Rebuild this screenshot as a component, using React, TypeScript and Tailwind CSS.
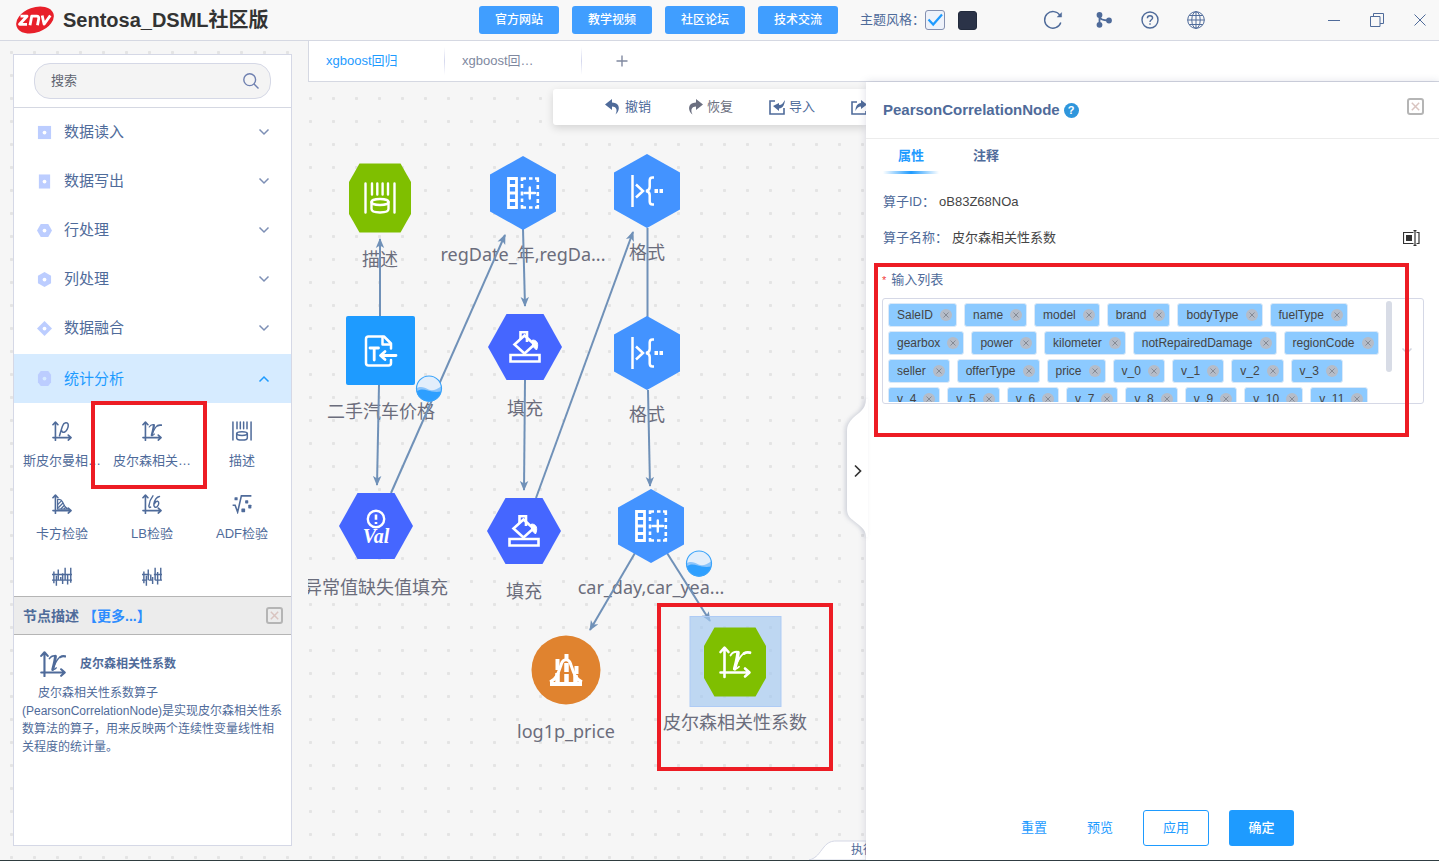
import React, { useState } from "react";

/* ------------------------------------------------------------------ */
/* Operator glyphs, all drawn in a 32 x 32 box with the current colour */
/* ------------------------------------------------------------------ */

type GlyphName =
  | "describe" | "pearson" | "spearman" | "chi" | "lb" | "adf" | "signalA" | "signalB"
  | "columns" | "format" | "fill" | "importText" | "value" | "normal";

const axes = (
  <g fill="none" stroke="currentColor" strokeWidth="2.6" strokeLinecap="round" strokeLinejoin="round">
    <path d="M5.500 31V2M1.500 6l4-4.400L9.500 6" />
    <path d="M1.500 26.500H30M26 22.500l4.500 4L26 30.500" />
  </g>
);

const glyphs: Record<GlyphName, React.ReactNode> = {
  describe: (
    <g fill="none" stroke="currentColor" strokeWidth="2.4" strokeLinecap="round">
      <path d="M1.500 1.500v29M30.500 1.500v29M8 1.500v11M13.300 1.500v11M18.600 1.500v11M24 1.500v11" />
      <ellipse cx="16" cy="20" rx="8.500" ry="3" />
      <path d="M7.500 20v7c0 4.600 17 4.600 17 0v-7" />
    </g>
  ),
  pearson: (
    <g fill="none" stroke="currentColor" strokeLinecap="round">
      {axes}
      <path d="M11.500 9.500c1.500-2.500 4-4 7-3.700" strokeWidth="1.800" />
      <path d="M19 6.500c-.3 5-2 11-3.300 16.300" strokeWidth="3.600" />
      <path d="M15.500 22.800c1.800.3 3.300-.5 4.500-2" strokeWidth="1.800" />
      <path d="M18 17c2-4.500 4.500-8.500 7.500-10" strokeWidth="1.800" />
      <path d="M25 7.500c2-1.300 4-1.300 6-.8" strokeWidth="2.800" />
    </g>
  ),
  spearman: (
    <g>
      {axes}
      <g fill="none" stroke="currentColor" strokeWidth="2.400" strokeLinecap="round">
        <path d="M12 23.500c2-6 3-11 5-16 2-5.500 8.500-6.500 9-1.500 .5 5-3 10.500-6.500 12-2 .6-3.500-.5-3.800-2.200" />
      </g>
    </g>
  ),
  chi: (
    <g>
      {axes}
      <path d="M9 24V9c3-1 6 0 8 4 2 5 5 9 8 11z" fill="none" stroke="currentColor" strokeWidth="2" />
      <path d="M9 17l6-6M10 22l8-8M14 24l6-6M19 24l3-3" fill="none" stroke="currentColor" strokeWidth="2" />
    </g>
  ),
  lb: (
    <g>
      {axes}
      <g fill="none" stroke="currentColor" strokeWidth="2.300" strokeLinecap="round">
        <path d="M17.500 3c-4 5-6 11-6.500 16-.1 2.500 1.500 3 2.800 2" />
        <path d="M28 4c-5 1-8 7-9 12-.8 5 3 6.500 5.500 4 3-3 3-8 .5-8.500-2-.3-4 1.500-5 4" />
      </g>
    </g>
  ),
  adf: (
    <g>
      <path d="M1 18h4l4 11L15 3h16" fill="none" stroke="currentColor" strokeWidth="2.500" />
      <g fill="currentColor">
        <rect x="4" y="5" width="5" height="5" rx="1" />
        <rect x="21" y="10" width="5" height="5" rx="1" />
        <rect x="15" y="23" width="6" height="6" rx="1" />
        <rect x="26" y="17" width="5" height="6" rx="1" />
      </g>
    </g>
  ),
  signalA: (
    <g fill="none" stroke="currentColor" strokeWidth="2.300">
      <path d="M0 12h32M0 21h32M3 7v19M7 14v16M10 4v17M14 16v6M17 10v17M21 1v20M25 12v16M30 1v24" />
    </g>
  ),
  signalB: (
    <g fill="none" stroke="currentColor" strokeWidth="2.300">
      <path d="M0 12h12M19 12h13M0 21h7M11 21h6M21 21h11M3 7v19M7 14v16M10 4v17M14 12v8M17 16v11M21 1v20M25 8v20M30 1v20" />
    </g>
  ),
  columns: (
    <g fill="none" stroke="currentColor">
      <path d="M1.500 1.500h8v29h-8zM1.500 8.500h8M1.500 16h8M1.500 23.500h8" strokeWidth="2.800" />
      <path d="M15 4V1.500h4M22 1.500h3.500M28 1.500h2.800V5M30.800 8v4M30.800 15v4M30.800 22v4M30.800 28v2.500H28M25.500 30.500H22M19 30.500h-4V28M15 25v-3.500M15 18.500v-4M15 11V7" strokeWidth="2.600" />
      <path d="M22.800 10.500v11M17.500 16h10.500" strokeWidth="2.400" strokeLinecap="round" />
    </g>
  ),
  format: (
    <g fill="none" stroke="currentColor" strokeWidth="2.500">
      <path d="M1.500 0v32M5 9.500l7 6.500-7 6.500" />
      <path d="M23 2.500h-1.500c-2 0-2.800 1-2.800 3v6.500c0 2.500-1 3.500-3.700 4 2.700.500 3.700 1.500 3.700 4v6.500c0 2 .8 3 2.800 3H23" />
      <path d="M23.500 16h3.500M28.500 16H32" strokeWidth="3.800" />
    </g>
  ),
  fill: (
    <g fill="none" stroke="currentColor" strokeWidth="2.600">
      <path d="M1.500 24h29v6.500h-29z" />
      <path d="M15.500 4.500L5.500 13.500l10 9 10-9z" />
      <path d="M11.500 8V1.300H18V11" />
      <path d="M23.500 9c5 0 6.500 4.500 4 10L23.500 15z" fill="currentColor" strokeWidth="1" />
    </g>
  ),
  importText: (
    <g fill="none" stroke="currentColor" strokeWidth="2.500" strokeLinecap="round" strokeLinejoin="round">
      <path d="M26 13.500V8.500l-7-7H3.500C2 1.500 1 2.500 1 4v24c0 1.500 1 2.500 2.500 2.500h20c1.500 0 2.500-1 2.500-2.500v-3" />
      <path d="M17.500 2v7.500H25" />
      <path d="M5 13h8.500M9.200 13v12" strokeWidth="2.800" />
      <path d="M31 20.500H16M20 16.500l-4.500 4 4.500 4" strokeWidth="2.800" />
    </g>
  ),
  value: (
    <g>
      <circle cx="16" cy="9" r="8.200" fill="none" stroke="currentColor" strokeWidth="2.400" />
      <path d="M16 4.500v5.200M16 12v2" fill="none" stroke="currentColor" strokeWidth="2.600" />
      <text x="16" y="33" textAnchor="middle" fill="currentColor" fontSize="20" fontStyle="italic" fontWeight="700" fontFamily="'Liberation Serif', serif">
        Val
      </text>
    </g>
  ),
  normal: (
    <g fill="none" stroke="currentColor">
      <path d="M0 30h32" strokeWidth="4" />
      <path d="M0 28C7 25 9 17 11 11c2-7 8-7 10 0 2 6 4 14 11 17" strokeWidth="3" />
      <path d="M7.500 5v11M16.500 0v6M26.500 12v8" strokeWidth="4" />
      <path d="M7.500 19v10M16.500 9v9M16.500 20v10M25.500 21v9" strokeWidth="4.500" />
    </g>
  ),
};

function Glyph({ name, className }: { name: GlyphName; className?: string }) {
  return (
    <svg viewBox="0 0 32 32" className={className} aria-hidden="true">
      {glyphs[name]}
    </svg>
  );
}

function Chevron({ up, className }: { up?: boolean; className?: string }) {
  return (
    <svg viewBox="0 0 12 8" className={className} fill="none" stroke="currentColor" strokeWidth="1.500" aria-hidden="true">
      <path d={up ? "M1.500 6.500L6 2l4.500 4.500" : "M1.500 1.500L6 6l4.500-4.500"} />
    </svg>
  );
}

function BoxedClose({ label }: { label: string }) {
  return (
    <button type="button" aria-label={label} className="flex size-[17px] items-center justify-center rounded-[3px] border-2 border-[#b5b5b5]">
      <svg viewBox="0 0 9 9" className="size-[9px] text-[#d9c4c0]" stroke="currentColor" strokeWidth="1.500" aria-hidden="true">
        <path d="M.8.8l7.400 7.400M8.200.8L.8 8.200" />
      </svg>
    </button>
  );
}

/* ------------------------------------------------------------------ */
/* Header                                                               */
/* ------------------------------------------------------------------ */

const links = ["官方网站", "教学视频", "社区论坛", "技术交流"];

function Header() {
  const [light, setLight] = useState(true);
  return (
    <header className="flex h-[41px] shrink-0 items-center border-b border-[#d5d8e2] bg-[#f8f8f8] pr-3 text-[#4f6b9a]">
      <div className="flex w-[479px] shrink-0 items-center pl-[15px]">
        <svg viewBox="0 0 40 30" className="h-[30px] w-10" role="img" aria-label="znv">
          <ellipse cx="20" cy="15" rx="19.500" ry="12.500" fill="#e8202a" transform="rotate(-20 20 15)" />
          <g fill="none" stroke="#fff" strokeWidth="2.800" strokeLinejoin="round">
            <path d="M5.500 11.200h6.500L4.500 19.300h7.500" />
            <path d="M15 20.200l1.700-9h5c1.600 0 2.300 1 2 2.600l-1.200 6.400" />
            <path d="M27.200 10.500l1.900 8.700 6.200-8.700" />
          </g>
        </svg>
        <h1 className="ml-2 text-xl leading-7 font-bold text-[#333]">Sentosa_DSML社区版</h1>
      </div>
      <nav className="flex gap-[13px]">
        {links.map((t) => (
          <a key={t} href="#" className="flex h-7 w-20 items-center justify-center rounded-[3px] bg-[#409eff] text-xs font-medium text-white">
            {t}
          </a>
        ))}
      </nav>
      <label htmlFor="theme" className="ml-[22px] text-[13px]">主题风格：</label>
      <span className="relative size-5">
        <input
          id="theme"
          type="checkbox"
          checked={light}
          onChange={(e) => setLight(e.target.checked)}
          className="peer block size-5 appearance-none rounded-[3px] border border-[#8490b0] bg-[#eef2fa]"
        />
        <svg viewBox="0 0 20 20" className="pointer-events-none absolute inset-0 hidden size-5 peer-checked:block" fill="none" stroke="#1e9bff" strokeWidth="2.200" aria-hidden="true">
          <path d="M3.500 9.500l4.700 5L17 4.500" />
        </svg>
      </span>
      <button type="button" aria-label="深色主题" className="ml-[13px] size-[19px] rounded-[3px] border border-[#222a3c] bg-[#2b3348]" />
      <div className="ml-[66px] flex items-center gap-7">
        <button type="button" aria-label="刷新" className="mr-1 block">
          <svg viewBox="0 0 20 20" className="size-5" fill="none" stroke="currentColor" strokeWidth="1.400" aria-hidden="true">
            <path d="M17.800 12.500A8.300 8.300 0 1 1 17 5.500" />
            <path d="M18.600 2.600v4.500h-4.500z" fill="currentColor" strokeWidth=".4" />
          </svg>
        </button>
        <button type="button" aria-label="流程" className="block">
          <svg viewBox="0 0 18 18" className="size-[18px]" fill="currentColor" aria-hidden="true">
            <circle cx="4.500" cy="4" r="2.900" />
            <circle cx="4.500" cy="13.800" r="2.900" />
            <circle cx="14" cy="9.500" r="2.900" />
            <path d="M4.500 4v10M4.500 5c0 4 4 4.500 9 4.500" fill="none" stroke="currentColor" strokeWidth="1.800" />
          </svg>
        </button>
        <button type="button" aria-label="帮助" className="block">
          <svg viewBox="0 0 18 18" className="size-[18px]" fill="none" stroke="currentColor" strokeWidth="1.400" aria-hidden="true">
            <circle cx="9" cy="9" r="8" />
            <path d="M6.400 7.300C6.400 5.700 7.500 4.800 9 4.800s2.600.9 2.600 2.300c0 1.600-2.600 1.900-2.600 3.900M9 12.200v1.600" />
          </svg>
        </button>
        <button type="button" aria-label="语言" className="block">
          <svg viewBox="0 0 18 18" className="size-[18px]" fill="none" stroke="currentColor" strokeWidth="1" aria-hidden="true">
            <circle cx="9" cy="9" r="8.300" />
            <ellipse cx="9" cy="9" rx="4.200" ry="8.300" />
            <path d="M9 .7v16.600M.7 9h16.600M2.200 4.500h13.600M2.200 13.500h13.600" />
          </svg>
        </button>
      </div>
      <div className="ml-auto flex items-center gap-[29px]">
        <button type="button" aria-label="最小化" className="block">
          <svg viewBox="0 0 14 14" className="size-3.5" stroke="currentColor" aria-hidden="true"><path d="M1 7.500h12" /></svg>
        </button>
        <button type="button" aria-label="还原" className="block">
          <svg viewBox="0 0 14 14" className="size-3.5" fill="none" stroke="currentColor" aria-hidden="true">
            <path d="M.5 3.500h9.500v10H.5zM3.500 3.500v-3h10v10H10" />
          </svg>
        </button>
        <button type="button" aria-label="关闭" className="block">
          <svg viewBox="0 0 14 14" className="size-3.5" stroke="currentColor" aria-hidden="true"><path d="M1.500 1.500l11 11M12.500 1.500l-11 11" /></svg>
        </button>
      </div>
    </header>
  );
}

/* ------------------------------------------------------------------ */
/* Sidebar                                                              */
/* ------------------------------------------------------------------ */

const categories: { label: string; shape: string; active?: boolean }[] = [
  { label: "数据读入", shape: "M1 1h14v14H1z" },
  { label: "数据写出", shape: "M2 .5h12v15H2z" },
  { label: "行处理", shape: "M4 1h8l4 7-4 7H4L0 8z" },
  { label: "列处理", shape: "M8 0l7 4v8l-7 4-7-4V4z" },
  { label: "数据融合", shape: "M8 0l8 8-8 8-8-8z" },
  { label: "统计分析", shape: "M4 0h8l3 4v8l-3 4H4l-3-4V4z", active: true },
];

const operators: { label?: string; glyph: GlyphName }[] = [
  { label: "斯皮尔曼相…", glyph: "spearman" },
  { label: "皮尔森相关…", glyph: "pearson" },
  { label: "描述", glyph: "describe" },
  { label: "卡方检验", glyph: "chi" },
  { label: "LB检验", glyph: "lb" },
  { label: "ADF检验", glyph: "adf" },
  { glyph: "signalA" },
  { glyph: "signalB" },
];

function Sidebar() {
  return (
    <aside className="mt-[13px] mb-[14px] ml-[13px] flex w-[279px] shrink-0 flex-col border border-[#d5d8e6] bg-white text-[#4f6b9a]">
      <div className="shrink-0 border-b border-[#d5d8e2] px-5 py-2">
        <div className="flex h-9 items-center rounded-2xl border border-[#d5d8e6] bg-[#f4f4f4] pr-[11px] pl-4">
          <input
            type="text"
            aria-label="搜索"
            placeholder="搜索"
            className="min-w-0 flex-1 bg-transparent text-[13px] text-[#5a6072] outline-none placeholder:text-[#5f6470]"
          />
          <svg viewBox="0 0 16 16" className="size-4 text-[#6f80b0]" fill="none" stroke="currentColor" strokeWidth="1.400" aria-hidden="true">
            <circle cx="6.700" cy="6.700" r="5.900" />
            <path d="M11 11l4.500 4.500" />
          </svg>
        </div>
      </div>
      <ul className="shrink-0">
        {categories.map((c) => (
          <li key={c.label}>
            <button
              type="button"
              aria-expanded={!!c.active}
              className={
                c.active
                  ? "mt-px flex h-[49px] w-full items-center bg-[#d6ebff] pr-[21px] pl-[23px] text-[#1e9bff]"
                  : "flex h-[49px] w-full items-center pr-[21px] pb-px pl-[23px]"
              }
            >
              <svg viewBox="0 0 16 16" className="size-[15px]" aria-hidden="true">
                <path d={c.shape} fill="#bccdff" />
                <circle cx="8" cy="8" r="2" fill={c.active ? "#d6ebff" : "#fff"} />
              </svg>
              <span className="ml-3 flex-1 text-left text-[15px] leading-6">{c.label}</span>
              <Chevron up={c.active} className={c.active ? "h-2 w-3" : "h-2 w-3 text-[#7d8fb5]"} />
            </button>
          </li>
        ))}
      </ul>
      <div className="relative min-h-0 flex-1">
        <ul className="grid h-full grid-cols-[90px_90px_90px] content-start overflow-hidden pl-[3px]">
          {operators.map((o) => (
            <li key={o.glyph} className="h-[73px]">
              <button type="button" className="flex w-full flex-col items-center pt-[18px] whitespace-nowrap">
                <Glyph name={o.glyph} className="size-5" />
                {o.label && <span className="mt-[10px] text-[13px] leading-5">{o.label}</span>}
              </button>
            </li>
          ))}
        </ul>
        <div className="pointer-events-none absolute -top-0.5 left-[77px] h-[88px] w-[116px] border-4 border-[#ed1c24]" />
      </div>
      <section className="h-[249px] shrink-0">
        <div className="flex h-[39px] items-center border-y border-[#b5b5b5] bg-[#ececec] pr-2 pl-[9px] text-sm font-bold">
          <h2>节点描述</h2>
          <a href="#" className="mr-auto ml-1 text-[#2d8cff]">【更多...】</a>
          <BoxedClose label="关闭描述" />
        </div>
        <div className="pt-4 pr-2 pl-2 text-xs leading-[18px]">
          <div className="flex items-center gap-[14px] pl-[18px]">
            <Glyph name="pearson" className="size-[26px]" />
            <h3 className="font-bold">皮尔森相关性系数</h3>
          </div>
          <p className="mt-[7px] indent-4">
            皮尔森相关性系数算子 (PearsonCorrelationNode)是实现皮尔森相关性系数算法的算子，用来反映两个连续性变量线性相关程度的统计量。
          </p>
        </div>
      </section>
    </aside>
  );
}

/* ------------------------------------------------------------------ */
/* Flow canvas                                                          */
/* ------------------------------------------------------------------ */

const ORIGIN = { x: 308, y: 82 };

type Shape = "octagon" | "pointy" | "flat" | "square" | "circle";
type FlowNode = { id: string; label: string; shape: Shape; glyph: GlyphName; x: number; y: number; labelY: number; badge?: boolean; selected?: boolean };

const nodes: FlowNode[] = [
  { id: "n1", label: "描述", shape: "octagon", glyph: "describe", x: 380, y: 198, labelY: 259 },
  { id: "n2", label: "regDate_年,regDa...", shape: "pointy", glyph: "columns", x: 523, y: 193, labelY: 254 },
  { id: "n3", label: "格式", shape: "pointy", glyph: "format", x: 647, y: 191, labelY: 252 },
  { id: "n4", label: "二手汽车价格", shape: "square", glyph: "importText", x: 381, y: 351, labelY: 411, badge: true },
  { id: "n5", label: "填充", shape: "flat", glyph: "fill", x: 525, y: 347, labelY: 408 },
  { id: "n6", label: "格式", shape: "pointy", glyph: "format", x: 647, y: 353, labelY: 414 },
  { id: "n7", label: "异常值缺失值填充", shape: "flat", glyph: "value", x: 376, y: 526, labelY: 587 },
  { id: "n8", label: "填充", shape: "flat", glyph: "fill", x: 524, y: 531, labelY: 591 },
  { id: "n9", label: "car_day,car_yea...", shape: "pointy", glyph: "columns", x: 651, y: 526, labelY: 587, badge: true },
  { id: "n10", label: "log1p_price", shape: "circle", glyph: "normal", x: 566, y: 670, labelY: 731 },
  { id: "n11", label: "皮尔森相关性系数", shape: "octagon", glyph: "pearson", x: 735, y: 662, labelY: 722, selected: true },
];

const edges: [number, number, number, number][] = [
  [380, 318, 380, 239],
  [379, 385, 377, 485],
  [391, 493, 505, 235],
  [523, 229, 525, 306],
  [525, 380, 524, 490],
  [536, 498, 633, 232],
  [648, 390, 650, 486],
  [635, 553, 590, 630],
  [667, 553, 710, 621],
];

const shapes: Record<Shape, React.ReactNode> = {
  octagon: <path d="M-20.500-34.500h41L31-16v32L20.500 34.500h-41L-31 16v-32z" fill="#7fbf00" />,
  pointy: <path d="M0-37L33-18.500v37L0 37-33 18.500v-37z" fill="#4393ff" />,
  flat: <path d="M-18.500-33h37L37 0 18.500 33h-37L-37 0z" fill="#4566ff" />,
  square: <rect x="-35" y="-35" width="69" height="69" rx="2" fill="#1e9bff" />,
  circle: <circle r="34.500" fill="#e0832f" />,
};

function Canvas() {
  return (
    <div className="absolute inset-0 overflow-hidden">
      {nodes.map((n) => (
        <span
          key={n.id}
          className="absolute -translate-x-1/2 -translate-y-1/2 font-['Noto_Sans','Noto_Sans_CJK_SC',sans-serif] text-lg leading-6 whitespace-nowrap text-[#6b6d7c]"
          style={{ left: n.x - ORIGIN.x, top: n.labelY - ORIGIN.y }}
        >
          {n.label}
        </span>
      ))}
      <svg viewBox="308 82 558 778" className="absolute top-0 left-0 h-[778px] w-[558px] text-white" aria-hidden="true">
        <defs>
          <marker id="arrow" viewBox="0 0 10 10" refX="9" refY="5" markerWidth="10" markerHeight="10" markerUnits="userSpaceOnUse" orient="auto">
            <path d="M0 .8L10 5 0 9.200l2.500-4.200z" fill="#7091b8" />
          </marker>
        </defs>
        <g stroke="#7091b8" strokeWidth="2">
          <path d="M647.500 228v90" />
          {edges.map((e) => (
            <line key={e.join()} x1={e[0]} y1={e[1]} x2={e[2]} y2={e[3]} markerEnd="url(#arrow)" />
          ))}
        </g>
        {nodes.map((n) => (
          <g key={n.id} transform={`translate(${n.x} ${n.y})`}>
            {n.selected && <rect x="-45" y="-45.500" width="91" height="90" fill="#a4c8f0" fillOpacity=".68" stroke="#aecbf5" />}
            {shapes[n.shape]}
            <g transform="translate(-16 -16)">{glyphs[n.glyph]}</g>
            {n.badge && (
              <g transform="translate(48 37.500)">
                <circle r="12.500" fill="#e2eefb" />
                <path d="M-12.500 0c4-3 8-1 12 1s8 0 12.500-3a12.500 12.500 0 0 1-24.500 5z" fill="#8cc5fb" />
                <path d="M-12.300 3c4-3 7-2 11-1s8 2 13.600 1a12.500 12.500 0 0 1-24.600 0z" fill="#2d9fff" />
                <circle r="12.500" fill="none" stroke="#3aa3fa" strokeWidth="1.200" />
              </g>
            )}
          </g>
        ))}
      </svg>
      <div className="absolute top-[521px] left-[349px] h-[168px] w-44 border-4 border-[#ed1c24]" />
    </div>
  );
}

const undoPath = "M7 0L0 5.500l7 5.500V7.500c4 0 6 3 3.500 8C15 12 16 4 7 3.500z";

function Tool({ label, children, muted }: { label?: string; children: React.ReactNode; muted?: boolean }) {
  return (
    <button
      type="button"
      className={muted ? "flex w-[82px] shrink-0 items-center gap-1 text-[13px] text-[#6b6f80]" : "flex w-[82px] shrink-0 items-center gap-1 text-[13px] text-[#4f6b9a]"}
    >
      <svg viewBox="0 0 16 16" className="size-4" fill="currentColor" aria-hidden="true">{children}</svg>
      {label}
    </button>
  );
}

function Toolbar() {
  return (
    <div className="absolute top-[7px] right-0 left-[245px] flex h-9 items-center overflow-hidden rounded-l-[3px] bg-white pb-px pl-[52px] shadow-[0_3px_8px_rgba(0,0,0,0.14)]">
      <Tool label="撤销"><path d={undoPath} /></Tool>
      <Tool label="恢复" muted><path d={undoPath} transform="matrix(-1 0 0 1 16 0)" /></Tool>
      <Tool label="导入">
        <path d="M6 2H1v13h14V9" fill="none" stroke="currentColor" strokeWidth="1.600" />
        <path d="M4 7l6-3v2c3 0 4-2 6-5-.5 5-2 8-6 8.500V12z" />
      </Tool>
      <Tool>
        <path d="M6 3H1v12h14v-3" fill="none" stroke="currentColor" strokeWidth="1.600" />
        <path d="M16 5.500L10 1v3c-3.500.5-5.500 3-5.500 8 1-2.500 3-4.500 5.500-4.500V10z" />
      </Tool>
    </div>
  );
}

/* ------------------------------------------------------------------ */
/* Property panel                                                       */
/* ------------------------------------------------------------------ */

const fields = [
  "SaleID", "name", "model", "brand", "bodyType", "fuelType", "gearbox", "power", "kilometer",
  "notRepairedDamage", "regionCode", "seller", "offerType", "price", "v_0", "v_1", "v_2", "v_3",
  "v_4", "v_5", "v_6", "v_7", "v_8", "v_9", "v_10", "v_11",
];

function Panel() {
  return (
    <aside className="relative flex w-[573px] shrink-0 flex-col bg-white text-[13px] text-[#4f6b9a] shadow-[0_0_8px_rgba(60,70,110,0.18)]">
      <svg viewBox="0 0 22 140" className="absolute top-[317px] left-[-20px] h-[140px] w-[22px] drop-shadow-[-2px_0_2px_rgba(70,80,120,0.22)]" aria-hidden="true">
        <path d="M20 0c0 11-8 14-13 19-4 4-6 8-6 12v79c0 6 3 9 7 12 6 5 12 8 12 16h2V0z" fill="#fff" />
      </svg>
      <button type="button" aria-label="收起面板" className="absolute top-[381px] left-[-16px] flex h-4 w-4 items-center justify-center text-[#333]">
        <svg viewBox="0 0 8 14" className="h-3.5 w-2" fill="none" stroke="currentColor" strokeWidth="1.700" aria-hidden="true"><path d="M1 1.500L6.500 7 1 12.500" /></svg>
      </button>

      <div className="relative flex h-[57px] shrink-0 items-center border-b border-[#ececec] bg-white pr-[15px] pl-[17px]">
        <h2 className="text-[15px] leading-5 font-bold">PearsonCorrelationNode</h2>
        <button type="button" aria-label="帮助" className="ml-1 flex size-[15px] items-center justify-center rounded-full bg-[#2f96dc] text-[11px] leading-none font-bold text-white">?</button>
        <div className="mb-2 ml-auto"><BoxedClose label="关闭面板" /></div>
      </div>

      <div role="tablist" className="flex gap-[19px] pl-[17px] font-bold">
        <button type="button" role="tab" aria-selected="true" className="flex h-[35px] w-14 flex-col items-center pt-[7px] leading-5 text-[#1e9bff]">
          属性
          <span className="mt-auto h-[3px] w-full bg-[linear-gradient(90deg,rgba(30,155,255,0),#1e9bff_50%,rgba(30,155,255,0))]" />
        </button>
        <button type="button" role="tab" aria-selected="false" className="flex h-[35px] w-14 flex-col items-center pt-[7px] leading-5">注释</button>
      </div>

      <dl className="flex flex-col gap-4 pt-[18px] pr-4 pl-[17px] leading-5">
        <div className="flex gap-1">
          <dt>算子ID：</dt>
          <dd className="text-[#444]">oB83Z68NOa</dd>
        </div>
        <div className="flex items-center gap-1">
          <dt>算子名称：</dt>
          <dd className="text-[#444]">皮尔森相关性系数</dd>
          <dd className="mr-[3px] ml-auto flex">
            <button type="button" aria-label="编辑名称">
              <svg viewBox="0 0 17 16" className="h-4 w-[17px] text-[#333]" fill="none" stroke="currentColor" strokeWidth="1.200" aria-hidden="true">
                <path d="M10.500 2.500h-10v11h10M13.500 2.500H16v11h-2.500M10.500.6h3M12 .6v14.800M10.500 15.400h3" />
                <rect x="3" y="5" width="6" height="6" fill="currentColor" stroke="none" />
              </svg>
            </button>
          </dd>
        </div>
      </dl>

      <section className="relative mt-[22px] pr-[15px] pl-4">
        <h3 id="input-list" className="leading-5"><span className="mr-[5px] text-[11px] text-[#f23c3c]">*</span>输入列表</h3>
        <div role="group" aria-labelledby="input-list" className="mt-2 flex h-[106px] items-start rounded-[3px] border border-[#d5d8e6] py-0.5 pl-[5px]">
          <ul className="flex h-[101px] w-[498px] flex-wrap content-start gap-x-[7px] gap-y-1 overflow-hidden pt-0.5">
            {fields.map((f) => (
              <li key={f} className="flex h-6 items-center gap-[7px] rounded-[3px] border border-[#dbe9f8] bg-[#8ccaff] pr-1 pl-2 text-xs text-[#444]">
                {f}
                <button type="button" aria-label={`移除 ${f}`} className="block">
                  <svg viewBox="0 0 12 12" className="size-3" aria-hidden="true">
                    <circle cx="6" cy="6" r="6" fill="#b5bcc8" />
                    <path d="M3.500 3.500l5 5M8.500 3.500l-5 5" stroke="#858b96" />
                  </svg>
                </button>
              </li>
            ))}
          </ul>
          <div className="h-[71px] w-1.5 rounded-full bg-[#d8dce6]" />
          <button type="button" aria-label="展开选项" className="ml-[9px] self-center"><Chevron className="h-2 w-3 text-[#d0d4de]" /></button>
        </div>
        <div className="pointer-events-none absolute -top-[7px] right-[30px] left-2 h-[174px] border-4 border-[#ed1c24]" />
      </section>

      <div className="mt-auto mb-[14px] flex h-9 items-center pl-[155px] text-[#1e9bff]">
        <button type="button">重置</button>
        <button type="button" className="ml-10">预览</button>
        <button type="button" className="ml-[30px] h-9 w-[66px] rounded-[3px] border border-[#1e9bff]">应用</button>
        <button type="button" className="ml-5 h-9 w-[65px] rounded-[3px] bg-[#1e9bff] font-medium text-white">确定</button>
      </div>
    </aside>
  );
}

/* ------------------------------------------------------------------ */

function TabBar() {
  return (
    <div role="tablist" className="flex h-[41px] shrink-0 items-center border-b border-l border-[#d5d8e2] bg-white text-[13px] leading-5">
      <button type="button" role="tab" aria-selected="true" className="w-[135px] pl-[17px] text-left text-[#1e9bff]">xgboost回归</button>
      <span className="h-7 w-px bg-[linear-gradient(rgba(213,216,238,0),#d5d8ee,rgba(213,216,238,0))]" />
      <button type="button" role="tab" aria-selected="false" className="w-[136px] pl-[17px] text-left text-[#8089a0]">xgboost回…</button>
      <span className="h-7 w-px bg-[linear-gradient(rgba(213,216,238,0),#d5d8ee,rgba(213,216,238,0))]" />
      <button type="button" aria-label="新建" className="ml-[34px] text-[#8089a0]">
        <svg viewBox="0 0 12 12" className="size-3" stroke="currentColor" strokeWidth="1.400" aria-hidden="true"><path d="M6 .5v11M.5 6h11" /></svg>
      </button>
    </div>
  );
}

export default function App() {
  return (
    <div className="flex h-screen flex-col border-b border-[#2f3d3f] font-['Liberation_Sans','Noto_Sans_CJK_SC',sans-serif]">
      <Header />
      <div className="flex min-h-0 flex-1 bg-[#f6f6f6] bg-[radial-gradient(circle_at_center,#e4e4e4_1.3px,transparent_1.9px)] bg-[size:23px_23px]">
        <Sidebar />
        <div className="ml-4 flex min-w-0 flex-1 flex-col">
          <TabBar />
          <div className="flex min-h-0 flex-1">
            <main className="relative min-w-0 flex-1">
              <Canvas />
              <Toolbar />
              <div className="absolute right-0 bottom-0 h-5 w-[60px] overflow-hidden">
                <svg viewBox="0 0 60 20" className="absolute inset-0 h-5 w-[60px]" aria-hidden="true">
                  <path d="M3 20c8-2 10-7 15-13 4-5 8-6 12-6h30v19z" fill="#fff" stroke="#d5d8e6" />
                </svg>
                <span className="absolute top-0 left-[45px] text-xs leading-5 whitespace-nowrap text-[#4f6b9a]">执行</span>
              </div>
            </main>
            <Panel />
          </div>
        </div>
      </div>
    </div>
  );
}
